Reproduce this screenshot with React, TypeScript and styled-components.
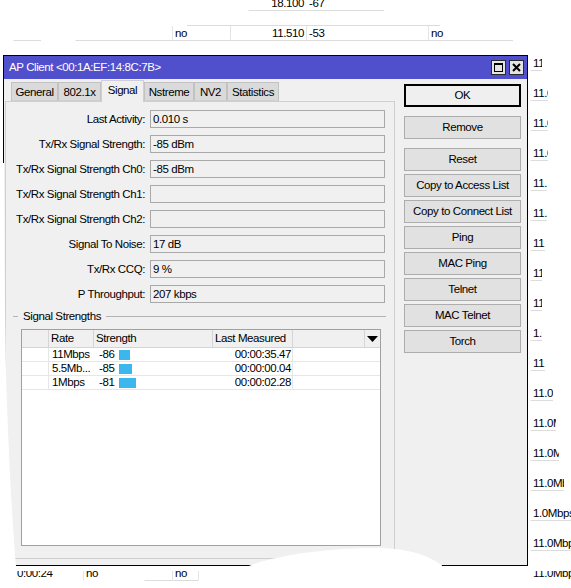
import React from "react";
import styled, { createGlobalStyle } from "styled-components";

const GlobalStyle = createGlobalStyle`
  html, body {
    margin: 0;
    padding: 0;
    background: #fff;
  }
  body {
    font-family: "Liberation Sans", Arial, sans-serif;
    font-size: 11.5px;
    letter-spacing: -0.4px;
    color: #000;
  }
`;

type BgCellData = {
  w: number;
  text?: string;
  line?: boolean;
  sep?: boolean;
  right?: boolean;
  pl?: number;
};

type BgRowData = {
  top?: [number, number];
  cells: BgCellData[];
};

const rightColumn: [string, number][] = [
  ["11.0Mbps", 12],
  ["11.0Mbps", 18],
  ["11.0Mbps", 18],
  ["11.0Mbps", 18],
  ["11.0Mbps", 17],
  ["11.0Mbps", 17],
  ["11.0Mbps", 15],
  ["11.0Mbps", 12],
  ["11.0Mbps", 12],
  ["1.0Mbps", 12],
  ["11.0Mbps", 15],
  ["11.0Mbps", 23],
  ["11.0Mbps", 26],
  ["11.0Mbps", 29],
  ["11.0Mbps", 34],
  ["1.0Mbps", 41],
  ["11.0Mbps", 41],
];

const bgRows: BgRowData[] = [
  {
    cells: [
      { w: 248 },
      { w: 58, text: "18.100", right: true, line: true },
      { w: 78, text: "-67", line: true },
    ],
  },
  {
    top: [187, 253],
    cells: [
      { w: 13 },
      { w: 28, line: true },
      { w: 34 },
      { w: 97, line: true },
      { w: 58, text: "no", line: true, sep: true },
      { w: 76, text: "11.510", right: true, line: true, sep: true },
      { w: 122, text: "-53", line: true, sep: true },
      { w: 85, text: "no", line: true, sep: true },
    ],
  },
  ...rightColumn.map(([text, w]) => ({
    cells: [{ w: 530 }, { w, text, line: true }],
  })),
  {
    cells: [
      { w: 16 },
      { w: 67, text: "0:00:24", pl: 0 },
      { w: 61, text: "no", sep: true },
      { w: 28, line: true },
      { w: 26, text: "no", line: true, sep: true },
      { w: 32, sep: true },
      { w: 300 },
      { w: 41, text: "11.0Mbps" },
    ],
  },
];

const fields = [
  ["Last Activity:", "0.010 s"],
  ["Tx/Rx Signal Strength:", "-85 dBm"],
  ["Tx/Rx Signal Strength Ch0:", "-85 dBm"],
  ["Tx/Rx Signal Strength Ch1:", ""],
  ["Tx/Rx Signal Strength Ch2:", ""],
  ["Signal To Noise:", "17 dB"],
  ["Tx/Rx CCQ:", "9 %"],
  ["P Throughput:", "207 kbps"],
];

const tabs: [string, number][] = [
  ["General", 47],
  ["802.1x", 43],
  ["Signal", 43],
  ["Nstreme", 50],
  ["NV2", 33],
  ["Statistics", 52],
];

const strengths = [
  { rate: "11Mbps", value: "-86", bar: 11, time: "00:00:35.47" },
  { rate: "5.5Mb...", value: "-85", bar: 13, time: "00:00:00.04" },
  { rate: "1Mbps", value: "-81", bar: 17, time: "00:00:02.28" },
];

const colWidths = [27, 45, 119, 80, 72, 15];

const buttons = [
  "Remove",
  "Reset",
  "Copy to Access List",
  "Copy to Connect List",
  "Ping",
  "MAC Ping",
  "Telnet",
  "MAC Telnet",
  "Torch",
];

const App = () => {
  return (
    <Desktop>
      <GlobalStyle />
      <BgList>
        {bgRows.map((row, i) => (
          <BgRow key={i}>
            <Strip>
              {row.top && <Segment $x={row.top[0]} $w={row.top[1]} />}
            </Strip>
            <Strip>
              {row.cells.map((c, j) => (
                <BgCell
                  key={j}
                  $w={c.w}
                  $line={c.line}
                  $sep={c.sep}
                  $right={c.right}
                  $pl={c.pl ?? 2}
                >
                  {c.text}
                </BgCell>
              ))}
            </Strip>
          </BgRow>
        ))}
      </BgList>

      <Window>
        <TitleBar>
          <Title>AP Client &lt;00:1A:EF:14:8C:7B&gt;</Title>
          <TitleButton>
            <svg width="11" height="11" viewBox="0 0 11 11">
              <rect x="1.5" y="1.5" width="8" height="8" fill="none" stroke="#000" strokeWidth="1" />
              <line x1="1" y1="2" x2="10" y2="2" stroke="#000" strokeWidth="2" />
            </svg>
          </TitleButton>
          <TitleButton>
            <svg width="11" height="11" viewBox="0 0 11 11">
              <path d="M2 2 L9 9 M9 2 L2 9" stroke="#000" strokeWidth="2" />
            </svg>
          </TitleButton>
        </TitleBar>

        <Body>
          <LeftCol>
            <TabBar>
              {tabs.map(([name, w]) => (
                <Tab key={name} $w={w} $active={name === "Signal"}>
                  {name}
                </Tab>
              ))}
            </TabBar>
            <Panel>
              {fields.map(([label, value]) => (
                <FormRow key={label}>
                  <Label>{label}</Label>
                  <Field>{value}</Field>
                </FormRow>
              ))}

              <GroupHeader>
                <GroupDash />
                <GroupTitle>Signal Strengths</GroupTitle>
                <GroupLine />
              </GroupHeader>

              <Table>
                <HeadRow>
                  <HeadCell $w={colWidths[0]} />
                  <HeadCell $w={colWidths[1]}>Rate</HeadCell>
                  <HeadCell $w={colWidths[2]}>Strength</HeadCell>
                  <HeadCell $w={colWidths[3]}>Last Measured</HeadCell>
                  <HeadCell $w={colWidths[4]} />
                  <ArrowCell>
                    <svg width="11" height="6" viewBox="0 0 11 6">
                      <path d="M0 0 L11 0 L5.5 6 Z" fill="#000" />
                    </svg>
                  </ArrowCell>
                </HeadRow>
                {strengths.map((s) => (
                  <DataRow key={s.rate}>
                    <DataCell $w={colWidths[0]} $sep />
                    <DataCell $w={colWidths[1]}>{s.rate}</DataCell>
                    <StrengthCell $w={colWidths[2]}>
                      <StrengthValue>{s.value}</StrengthValue>
                      <Bar style={{ width: s.bar }} />
                    </StrengthCell>
                    <DataCell $w={colWidths[3]} $sep $right>
                      {s.time}
                    </DataCell>
                  </DataRow>
                ))}
              </Table>
            </Panel>
          </LeftCol>

          <ButtonCol>
            <Button $primary>OK</Button>
            {buttons.map((b, i) => (
              <Button key={b} $wide={i === 0}>
                {b}
              </Button>
            ))}
          </ButtonCol>
        </Body>
      </Window>

      <Tear viewBox="0 0 571 588">
        <path
          d="M0 163 L4 163 C4.4 250, 4.8 330, 6.5 390 C8.5 450, 12 520, 16 566 L16 588 L0 588 Z"
          fill="#fff"
        />
        <path
          d="M240 588 L248 566.5 C262 559, 320 547, 382 548 C410 549, 430 556, 442 565.5 L442 588 Z"
          fill="#fff"
        />
        <rect x="0" y="566" width="528" height="5" fill="#fff" />
        <rect x="529" y="566" width="42" height="5" fill="#fff" />
      </Tear>
    </Desktop>
  );
};

const Desktop = styled.div`
  position: relative;
  width: 571px;
  height: 588px;
  overflow: hidden;
  background: #fff;
`;

const BgList = styled.div`
  display: flex;
  flex-direction: column;
  margin-top: -19px;
`;

const BgRow = styled.div`
  display: flex;
  flex-direction: column;
  height: 30px;
`;

const Strip = styled.div`
  display: flex;
  height: 15px;
`;

const Segment = styled.div<{ $x: number; $w: number }>`
  margin-left: ${(p) => p.$x}px;
  width: ${(p) => p.$w}px;
  height: 15px;
  box-sizing: border-box;
  border-bottom: 1px solid #dcdcdc;
`;

const BgCell = styled.div<{
  $w: number;
  $line?: boolean;
  $sep?: boolean;
  $right?: boolean;
  $pl: number;
}>`
  flex: none;
  box-sizing: border-box;
  width: ${(p) => p.$w}px;
  height: 15px;
  line-height: 14px;
  padding: 0 2px 0 ${(p) => p.$pl}px;
  white-space: nowrap;
  overflow: hidden;
  text-align: ${(p) => (p.$right ? "right" : "left")};
  border-bottom: 1px solid ${(p) => (p.$line ? "#dcdcdc" : "transparent")};
  border-left: 1px solid ${(p) => (p.$sep ? "#e4e4e4" : "transparent")};
`;

const Window = styled.div`
  position: absolute;
  left: 3px;
  top: 55px;
  width: 525px;
  height: 511px;
  box-sizing: border-box;
  border: 1px solid #000;
  background: #f0f0f0;
  display: flex;
  flex-direction: column;
`;

const TitleBar = styled.div`
  display: flex;
  align-items: center;
  gap: 3px;
  height: 23px;
  padding: 0 3px 0 5px;
  background: #5050cc;
`;

const Title = styled.div`
  flex: 1;
  color: #fff;
  font-size: 11.5px;
  padding-bottom: 1px;
`;

const TitleButton = styled.div`
  display: flex;
  align-items: center;
  justify-content: center;
  width: 15px;
  height: 15px;
  box-sizing: border-box;
  border: 1px solid #2a2a2a;
  background: #e4e4e4;
`;

const Body = styled.div`
  flex: 1;
  display: flex;
  padding-top: 1px;
`;

const LeftCol = styled.div`
  display: flex;
  flex-direction: column;
  width: 390px;
  margin-left: 1px;
`;

const TabBar = styled.div`
  display: flex;
  align-items: flex-end;
  height: 21px;
  padding-left: 6px;
  position: relative;
  z-index: 1;
`;

const Tab = styled.div<{ $w: number; $active?: boolean }>`
  box-sizing: border-box;
  width: ${(p) => p.$w}px;
  height: ${(p) => (p.$active ? 22 : 19)}px;
  margin-bottom: ${(p) => (p.$active ? -1 : 0)}px;
  border: 1px solid ${(p) => (p.$active ? "#cfcfcf" : "#c2c2c2")};
  border-bottom: ${(p) => (p.$active ? "none" : "1px solid #cfcfcf")};
  background: ${(p) => (p.$active ? "#f0f0f0" : "#dadada")};
  text-align: center;
  line-height: 18px;
`;

const Panel = styled.div`
  box-sizing: border-box;
  height: 458px;
  border: 1px solid #cfcfcf;
  padding: 8px 8px 0 0;
  display: flex;
  flex-direction: column;
`;

const FormRow = styled.div`
  display: grid;
  grid-template-columns: 139px 235px;
  column-gap: 5px;
  height: 18px;
  margin-bottom: 7px;
`;

const Label = styled.div`
  text-align: right;
  line-height: 18px;
  white-space: nowrap;
`;

const Field = styled.div`
  box-sizing: border-box;
  border: 1px solid #a9a9a9;
  background: #f0f0f0;
  padding-left: 2px;
  line-height: 16px;
`;

const GroupHeader = styled.div`
  display: flex;
  align-items: center;
  height: 14px;
  margin-top: -1px;
  padding-left: 7px;
`;

const GroupDash = styled.div`
  width: 5px;
  height: 1px;
  background: #b4b4b4;
`;

const GroupTitle = styled.div`
  margin: 0 5px 0 5px;
  white-space: nowrap;
`;

const GroupLine = styled.div`
  flex: 1;
  height: 1px;
  background: #b4b4b4;
`;

const Table = styled.div`
  box-sizing: border-box;
  width: 360px;
  height: 217px;
  margin: 6px 0 0 15px;
  border: 1px solid #a0a0a0;
  background: #fff;
`;

const HeadRow = styled.div`
  display: flex;
  height: 18px;
  box-sizing: border-box;
  border-bottom: 1px solid #d5d5d5;
  background: #f0f0f0;
`;

const HeadCell = styled.div<{ $w: number }>`
  box-sizing: border-box;
  width: ${(p) => p.$w}px;
  padding-left: 2px;
  border-right: 1px solid #d5d5d5;
  line-height: 17px;
  white-space: nowrap;
`;

const ArrowCell = styled.div`
  flex: 1;
  display: flex;
  align-items: center;
  justify-content: center;
`;

const DataRow = styled.div`
  display: flex;
  height: 14px;
  box-sizing: border-box;
  border-bottom: 1px solid #e6e6e6;
`;

const DataCell = styled.div<{ $w: number; $sep?: boolean; $right?: boolean }>`
  box-sizing: border-box;
  width: ${(p) => p.$w}px;
  padding: 0 1px 0 3px;
  border-right: 1px solid ${(p) => (p.$sep ? "#e6e6e6" : "transparent")};
  text-align: ${(p) => (p.$right ? "right" : "left")};
  line-height: 13px;
  white-space: nowrap;
  overflow: hidden;
`;

const StrengthCell = styled.div<{ $w: number }>`
  box-sizing: border-box;
  width: ${(p) => p.$w}px;
  display: flex;
  align-items: center;
  padding-left: 5px;
  line-height: 13px;
`;

const StrengthValue = styled.span`
  width: 20px;
`;

const Bar = styled.span`
  height: 10px;
  background: #3cb7ed;
`;

const ButtonCol = styled.div`
  display: flex;
  flex-direction: column;
  gap: 3px;
  width: 117px;
  margin-left: 9px;
  padding-top: 4px;
`;

const Button = styled.div<{ $primary?: boolean; $wide?: boolean }>`
  box-sizing: border-box;
  height: 23px;
  margin-bottom: ${(p) => (p.$primary || p.$wide ? 6 : 0)}px;
  border: 1px solid ${(p) => (p.$primary ? "#000" : "#adadad")};
  box-shadow: ${(p) => (p.$primary ? "inset 0 0 0 1px #000" : "none")};
  background: ${(p) => (p.$primary ? "#efefef" : "#e1e1e1")};
  text-align: center;
  line-height: 21px;
  white-space: nowrap;
`;

const Tear = styled.svg`
  position: absolute;
  left: 0;
  top: 0;
  width: 571px;
  height: 588px;
  pointer-events: none;
`;

export default App;
